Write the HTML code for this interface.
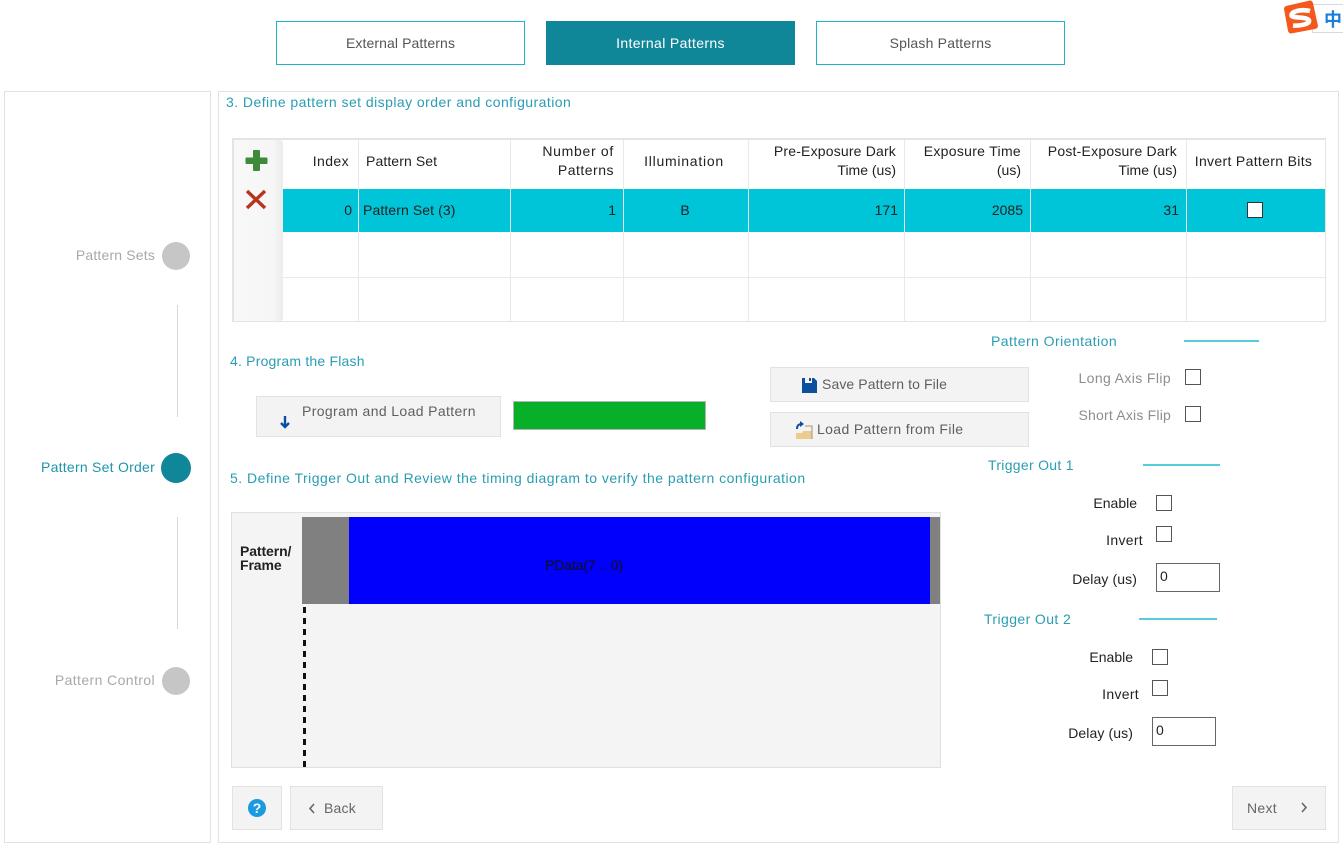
<!DOCTYPE html>
<html><head><meta charset="utf-8"><style>
html,body{margin:0;padding:0;background:#fff;width:1343px;height:848px;overflow:hidden}
body{position:relative;font-family:"Liberation Sans","Noto Sans CJK SC",sans-serif;font-size:14px;color:#222;filter:blur(.3px)}
.a{position:absolute;box-sizing:border-box}
.t{position:absolute;white-space:nowrap;line-height:18px;height:18px;margin-top:-1px}
.r{text-align:right}.c{text-align:center}
.h{color:#2a9db3;letter-spacing:.45px}
.g{color:#a9a9a9}
.tb{position:absolute;top:21px;width:249px;height:44px;box-sizing:border-box;border:1px solid #1fb5c9;text-align:center;line-height:42px;color:#555;background:#fff}
.btn{position:absolute;box-sizing:border-box;background:#f3f3f3;border:1px solid #e2e2e2;color:#5f5f5f}
.cb{position:absolute;box-sizing:border-box;width:16px;height:16px;border:1px solid #555;background:#fff}
.in{position:absolute;box-sizing:border-box;width:64px;height:29px;border:1px solid #666;background:#fff;line-height:24px;padding-left:3px;color:#222}
.ln{position:absolute;height:2px;background:#55cbdc}
.v{position:absolute;width:1px;background:#e9e9e9}
.hl{position:absolute;height:1px;background:#e9e9e9;left:283px;width:1042px}
.dot{position:absolute;width:28px;height:28px;border-radius:50%;background:#c6c6c6}
</style></head><body>

<div class="tb" style="left:276px;letter-spacing:.1px">External Patterns</div>
<div class="tb" style="left:546px;background:#0f8798;border-color:#0f8798;color:#fff;letter-spacing:.35px">Internal Patterns</div>
<div class="tb" style="left:816px;letter-spacing:.2px">Splash Patterns</div>

<div class="a" style="left:1312px;top:4px;width:31px;height:29px;background:#fff;border:1px solid #d5d9e3;border-right:0"></div>
<div class="t" style="left:1324px;top:10px;color:#1a7fdc;font-size:18px;font-weight:bold;line-height:20px;height:20px;font-family:'Noto Sans CJK SC',sans-serif">中</div>
<svg class="a" style="left:1282px;top:0" width="38" height="36" viewBox="0 0 38 36"><path d="M4 6 L28 0.5 Q30 0.5 31 3 L36 26 Q36 28 33 29 L9 33.5 Q7 33.5 6 31 L2 9 Q2 7 4 6Z" fill="#f4581c"/><path d="M28 11 C20 9 10 11 9.500 15 C9 19 25 16 27 20.500 C28 24.500 17 26 11 25.500" fill="none" stroke="#fff" stroke-width="4.600"/></svg>

<div class="a" style="left:4px;top:91px;width:207px;height:752px;border:1px solid #e2e2e2"></div>
<div class="a" style="left:218px;top:91px;width:1121px;height:752px;border:1px solid #e2e2e2"></div>

<div class="t r g" style="right:1188px;top:247px;letter-spacing:.17px">Pattern Sets</div>
<div class="dot" style="left:162px;top:242px"></div>
<div class="a" style="left:177px;top:305px;width:1px;height:112px;background:#d6d6d6"></div>
<div class="t r" style="right:1188px;top:459px;color:#1f95ab;letter-spacing:.25px">Pattern Set Order</div>
<div class="dot" style="left:161px;top:453px;width:30px;height:30px;background:#0f8798"></div>
<div class="a" style="left:177px;top:517px;width:1px;height:112px;background:#d6d6d6"></div>
<div class="t r g" style="right:1188px;top:672px;letter-spacing:.4px">Pattern Control</div>
<div class="dot" style="left:162px;top:667px"></div>

<div class="t h" style="left:226px;top:94px">3. Define pattern set display order and configuration</div>

<!-- table -->
<div class="a" style="left:232px;top:138px;width:1094px;height:184px;border:2px solid #e4e4e4;border-width:2px 1px 1px 2px;background:#fff"></div>
<div class="a" style="left:234px;top:140px;width:49px;height:181px;border-radius:3px;background:linear-gradient(to right,#f8f8f8 0,#f6f6f6 80%,#ebebeb 100%)"></div>
<div class="a" style="left:283px;top:189px;width:1042px;height:43px;background:#00c4d8"></div>
<div class="hl" style="top:277px"></div>
<div class="v" style="left:358px;top:140px;height:181px"></div>
<div class="v" style="left:510px;top:140px;height:181px"></div>
<div class="v" style="left:623px;top:140px;height:181px"></div>
<div class="v" style="left:748px;top:140px;height:181px"></div>
<div class="v" style="left:904px;top:140px;height:181px"></div>
<div class="v" style="left:1030px;top:140px;height:181px"></div>
<div class="v" style="left:1186px;top:140px;height:181px"></div>

<svg class="a" style="left:245px;top:149px" width="24" height="24"><path d="M9 1h5a1 1 0 0 1 1 1v6.500h6.500a1 1 0 0 1 1 1v4.500a1 1 0 0 1-1 1H15v6a1 1 0 0 1-1 1H9a1 1 0 0 1-1-1v-6H1.500a1 1 0 0 1-1-1V9.500a1 1 0 0 1 1-1H8V2a1 1 0 0 1 1-1z" fill="#3c8a3a"/></svg>
<svg class="a" style="left:244px;top:188px" width="24" height="24"><path d="M3 3L21 20M21 3L3 20" stroke="#b8341f" stroke-width="3.400" fill="none"/></svg>

<div class="t r" style="right:994px;top:153px;letter-spacing:.4px">Index</div>
<div class="t" style="left:366px;top:153px;letter-spacing:.1px">Pattern Set</div>
<div class="t r" style="right:729px;top:143px;letter-spacing:.7px">Number of</div>
<div class="t r" style="right:729px;top:162px;letter-spacing:.5px">Patterns</div>
<div class="t c" style="left:624px;width:120px;top:153px;letter-spacing:.75px">Illumination</div>
<div class="t r" style="right:447px;top:143px;letter-spacing:.18px">Pre-Exposure Dark</div>
<div class="t r" style="right:447px;top:162px">Time (us)</div>
<div class="t r" style="right:322px;top:143px;letter-spacing:.3px">Exposure Time</div>
<div class="t r" style="right:322px;top:162px">(us)</div>
<div class="t r" style="right:166px;top:143px;letter-spacing:.22px">Post-Exposure Dark</div>
<div class="t r" style="right:166px;top:162px">Time (us)</div>
<div class="t c" style="left:1187px;width:133px;top:153px;letter-spacing:.33px">Invert Pattern Bits</div>

<div class="t r" style="right:991px;top:202px">0</div>
<div class="t" style="left:363px;top:202px;letter-spacing:.1px">Pattern Set (3)</div>
<div class="t r" style="right:727px;top:202px">1</div>
<div class="t c" style="left:624px;width:122px;top:202px">B</div>
<div class="t r" style="right:445px;top:202px">171</div>
<div class="t r" style="right:320px;top:202px">2085</div>
<div class="t r" style="right:164px;top:202px">31</div>
<div class="cb" style="left:1247px;top:202px;border-color:#333"></div>

<!-- section 4 -->
<div class="t h" style="left:230px;top:353px;letter-spacing:.2px">4. Program the Flash</div>
<div class="btn" style="left:256px;top:396px;width:245px;height:41px"></div>
<div class="t" style="left:302px;top:403px;color:#5f5f5f;letter-spacing:.37px">Program and Load Pattern</div>
<svg class="a" style="left:279px;top:414px" width="12" height="16"><path d="M6 2V13M2 9L6 13L10 9" fill="none" stroke="#0b4f9e" stroke-width="2.400"/></svg>
<div class="a" style="left:513px;top:401px;width:193px;height:29px;background:#08b02a;border:1px solid #b5b5b5"></div>

<div class="btn" style="left:770px;top:367px;width:259px;height:35px"></div>
<svg class="a" style="left:801px;top:377px" width="17" height="17"><path d="M1 1H4V6H11V1H13L16 4V16H1Z" fill="#0b4f9e"/><rect x="8" y="1" width="2" height="3" fill="#0b4f9e"/></svg>
<div class="t" style="left:822px;top:376px;color:#5f5f5f;letter-spacing:.1px">Save Pattern to File</div>
<div class="btn" style="left:770px;top:412px;width:259px;height:35px"></div>
<svg class="a" style="left:794px;top:421px" width="20" height="20"><path d="M2 12H8L9 10H18V18H2Z" fill="#eccb8f"/><path d="M11 5H18V18" fill="none" stroke="#a99467"/><path d="M3 8C3 4 5 3 8 3" fill="none" stroke="#0b4f9e" stroke-width="2"/><path d="M6 0L10 3L6 6Z" fill="#0b4f9e"/></svg>
<div class="t" style="left:817px;top:421px;color:#5f5f5f;letter-spacing:.36px">Load Pattern from File</div>

<div class="t h" style="left:991px;top:333px">Pattern Orientation</div>
<div class="ln" style="left:1184px;top:340px;width:75px"></div>
<div class="t r" style="right:172px;top:370px;color:#8e8e8e;letter-spacing:.38px">Long Axis Flip</div>
<div class="cb" style="left:1185px;top:369px"></div>
<div class="t r" style="right:172px;top:407px;color:#8e8e8e;letter-spacing:.2px">Short Axis Flip</div>
<div class="cb" style="left:1185px;top:406px"></div>

<div class="t h" style="left:988px;top:457px;letter-spacing:.3px">Trigger Out 1</div>
<div class="ln" style="left:1143px;top:464px;width:77px"></div>
<div class="t r" style="right:206px;top:495px">Enable</div>
<div class="cb" style="left:1156px;top:495px"></div>
<div class="t r" style="right:200px;top:532px;letter-spacing:.3px">Invert</div>
<div class="cb" style="left:1156px;top:526px"></div>
<div class="t r" style="right:206px;top:571px;letter-spacing:.1px">Delay (us)</div>
<div class="in" style="left:1156px;top:563px">0</div>

<div class="t h" style="left:984px;top:611px;letter-spacing:.4px">Trigger Out 2</div>
<div class="ln" style="left:1139px;top:618px;width:78px"></div>
<div class="t r" style="right:210px;top:649px">Enable</div>
<div class="cb" style="left:1152px;top:649px"></div>
<div class="t r" style="right:204px;top:686px;letter-spacing:.3px">Invert</div>
<div class="cb" style="left:1152px;top:680px"></div>
<div class="t r" style="right:210px;top:725px;letter-spacing:.1px">Delay (us)</div>
<div class="in" style="left:1152px;top:717px">0</div>

<!-- section 5 -->
<div class="t h" style="left:230px;top:470px;letter-spacing:.48px">5. Define Trigger Out and Review the timing diagram to verify the pattern configuration</div>
<div class="a" style="left:231px;top:512px;width:710px;height:256px;background:#f4f4f4;border:1px solid #e0e0e0"></div>
<div class="t" style="left:240px;top:545px;font-size:14px;line-height:14px;height:28px;font-weight:bold;letter-spacing:-.1px;color:#222">Pattern/<br>Frame</div>
<div class="a" style="left:302px;top:517px;width:47px;height:87px;background:#808080"></div>
<div class="a" style="left:349px;top:517px;width:581px;height:87px;background:#0000fc"></div>
<div class="a" style="left:930px;top:517px;width:10px;height:87px;background:#808080"></div>
<div class="t c" style="left:349px;width:470px;top:557px;color:#111;letter-spacing:-.1px">PData(7 .. 0)</div>
<div class="a" style="left:303px;top:604px;width:3px;height:163px;background:repeating-linear-gradient(to bottom,#111 0,#111 6px,transparent 6px,transparent 11px) 0 3px no-repeat"></div>

<!-- footer -->
<div class="btn" style="left:232px;top:786px;width:50px;height:44px"></div>
<svg class="a" style="left:247px;top:798px" width="20" height="20"><circle cx="10" cy="10" r="9" fill="#1a9ae0"/><text x="10" y="15" text-anchor="middle" font-family="Liberation Sans" font-weight="bold" font-size="14" fill="#fff">?</text></svg>
<div class="btn" style="left:290px;top:786px;width:93px;height:44px"></div>
<svg class="a" style="left:308px;top:803px" width="8" height="11"><path d="M6 1L2 5.500L6 10" fill="none" stroke="#666" stroke-width="1.600"/></svg>
<div class="t" style="left:324px;top:800px;color:#666;letter-spacing:.2px">Back</div>
<div class="btn" style="left:1232px;top:786px;width:94px;height:44px"></div>
<div class="t" style="left:1247px;top:800px;color:#666;letter-spacing:.3px">Next</div>
<svg class="a" style="left:1300px;top:802px" width="8" height="11"><path d="M2 1L6 5.500L2 10" fill="none" stroke="#666" stroke-width="1.600"/></svg>

</body></html>
